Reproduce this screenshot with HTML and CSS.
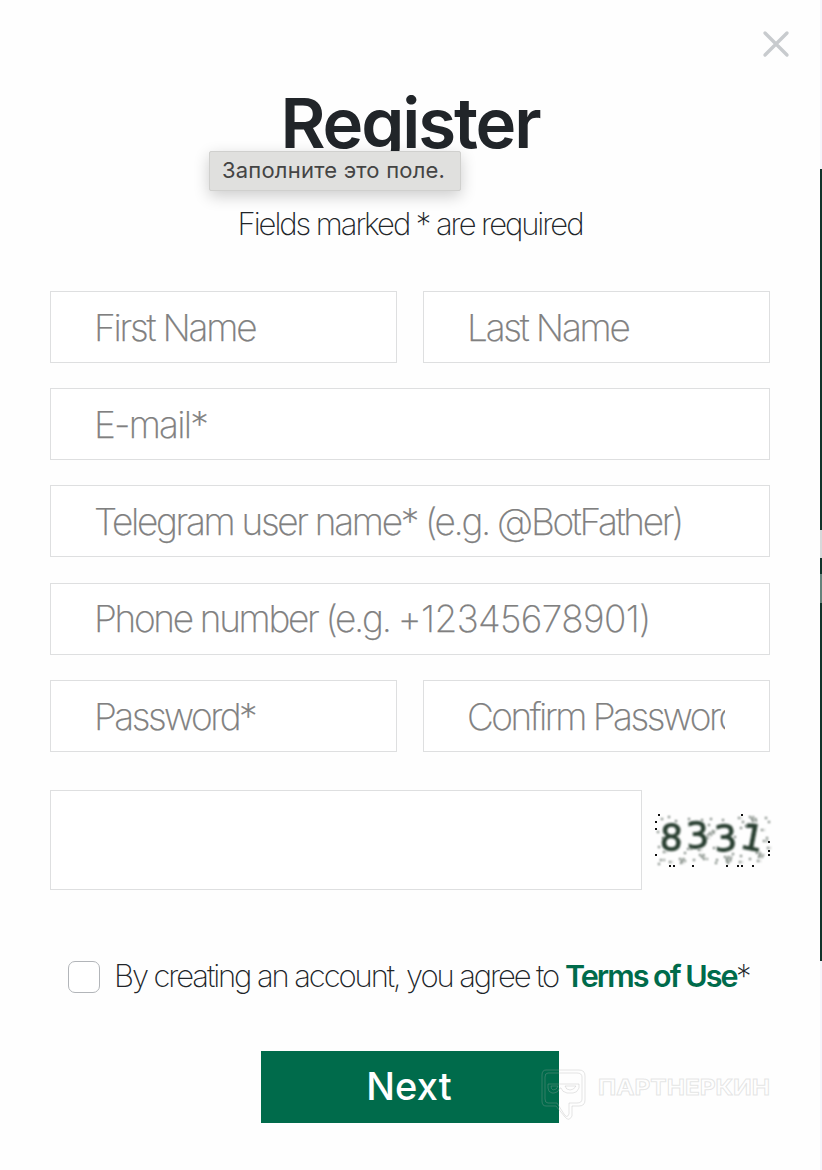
FILE: index.html
```
<!DOCTYPE html>
<html lang="en">
<head>
<meta charset="utf-8">
<title>Register</title>
<link rel="stylesheet" href="styles.css">
</head>
<body>
<main class="modal">
  <button class="close" aria-label="Close"><svg width="28" height="28" viewBox="0 0 28 28"><path d="M3 3l22 22M25 3l-22 22"/></svg></button>
  <h1>Register</h1>
  <p class="note">Fields marked * are required</p>
  <form class="form" novalidate>
    <div class="row">
      <input class="field first" placeholder="First Name">
      <input class="field last" placeholder="Last Name">
    </div>
    <input class="field email" placeholder="E-mail*">
    <input class="field telegram" placeholder="Telegram user name* (e.g. @BotFather)">
    <div class="field phone">Phone number (e.g. <span>+12345678901)</span></div>
    <div class="row">
      <input class="field password" placeholder="Password*">
      <input class="field confirm" placeholder="Confirm Password*">
    </div>
    <div class="captcha-row">
      <input class="field captcha-input" aria-label="Code">
      <svg class="captcha" width="118" height="56" viewBox="0 0 118 56">
        <g class="smudge">
          <path d="M6 7h3M13 5h3M20 9h3M33 7h3M36 11h3M46 8h3M53 13h3M55 7h2M67 8h3M83 6h4M87 10h3M94 5h5M96 7h6M97 9h5M110 6h3M113 10h3M2 20h3M7 26h3M54 21h6M57 19h4M52 23h5M51 26h4M85 16h3M79 25h3M90 14h3M106 18h4M111 26h3M108 29h5M3 35h3M8 40h4M32 37h5M29 41h3M43 38h4M44 43h6M48 47h5M46 45h4M38 48h3M5 48h5M3 52h3M14 50h4M24 47h6M26 49h5M25 51h4M61 48h3M60 51h3M69 45h8M71 47h6M71 49h5M72 51h3M85 44h3M84 50h4M94 47h3M101 41h5M104 43h5M103 45h5M102 49h4M112 36h4M58 36h3M77 42h3"/>
        </g>
        <g class="digits">
          <text x="5" y="38" transform="rotate(2 15 25)">8</text>
          <text x="31" y="36" transform="rotate(-3 41 23)">3</text>
          <text x="59" y="39" transform="rotate(-3 68 27)">3</text>
          <text x="86" y="38" transform="rotate(11 96 25)">1</text>
        </g>
        <path class="specks" d="M3 3h2M86 3h2M0 10h2M0 17h2M0 43h2M14 54h2M18 54h2M37 54h2M71 54h2M82 54h2M86 54h2M97 54h2M113 30h2M113 39h2M113 43h2"/>
      </svg>
    </div>
    <div class="terms"><span class="check"></span><span class="agree">By creating an account, you agree to</span><b>Terms of Use</b><span>*</span></div>
    <button class="next" type="button">Next</button>
  </form>
  <div class="tooltip"><span>Заполните это поле.</span></div>
  <svg class="watermark" width="234" height="54" viewBox="0 0 234 54">
    <path d="M5 2H38Q44 2 44 8V32Q44 38 38 38H31V48Q28 54 24 49L15 38H5Q1 38 1 33V7Q1 2 5 2ZM7 5H36Q41 5 41 9V31Q41 35 36 35H28V46Q26 51 23 46L16 35H7Q4 35 4 31V9Q4 5 7 5ZM7 16H38V20Q36 25 32 25H26Q21 24 20 20H19Q17 25 13 25H11Q7 24 7 20Z"/>
    <path d="M10 18H17Q16 22 12 22Q10 21 10 18ZM24 18H35Q33 22 29 22Q25 22 24 18Z"/>
    <text x="57" y="27" textLength="172" lengthAdjust="spacingAndGlyphs">ПАРТНЕРКИН</text>
  </svg>
  <div class="backdrop"></div>
</main>
</body>
</html>
```
FILE: styles.css
```
*{box-sizing:border-box}
body{margin:0;background:#fff;font-family:Inter,sans-serif;font-weight:200;color:#212529}
.modal{position:relative;width:822px;height:1170px;padding:1px 52px 0 50px;overflow:hidden;background:#fefefe}
.close{position:absolute;right:32px;top:30px;border:0;background:none;padding:0}
.close svg{display:block;stroke:#c8cbce;stroke-width:3.4;stroke-linecap:round;fill:none}
h1{margin:80px 0 0;font-size:69px;line-height:84px;font-weight:600;text-align:center;letter-spacing:-2.1px}
.note{margin:37px 0 0;font-size:31px;line-height:44px;text-align:center;letter-spacing:-2.05px}
.form{margin-top:45px;display:flex;flex-direction:column}
.form>.field,.row+.row{margin-top:25.2px}
.row{display:grid;grid-template-columns:347px 347px;gap:26px}
.field{display:block;width:100%;min-width:0;height:72px;margin:0;border:1px solid #dedfe0;border-radius:0;padding:0 43px;background:#fff;font:200 37px Inter,sans-serif;letter-spacing:-2px;outline:0}
.field::placeholder{color:#808080;opacity:1;-webkit-text-stroke:.25px #808080}
.first,.last{letter-spacing:-2.2px}
.email{letter-spacing:-1.8px}
.telegram{letter-spacing:-2.3px}
.phone{line-height:70px;color:#808080;-webkit-text-stroke:.25px #808080;letter-spacing:-2.3px;white-space:nowrap}
.phone span{letter-spacing:-.6px}
.form>.phone{margin-top:25.6px}
.phone+.row{margin-top:25.2px}
.password{letter-spacing:-2.5px}
.confirm{letter-spacing:-2.5px;padding-right:44px}
.captcha-row{display:flex;gap:13px;align-items:center;margin-top:37.8px}
.captcha-input{flex:none;width:592px;height:100px}
.captcha{flex:none}
.digits{font:400 36px "DejaVu Sans",sans-serif;fill:#283e30;stroke:#283e30;stroke-width:1;filter:blur(.8px)}
.smudge{fill:none;stroke:#667269;stroke-width:2;stroke-dasharray:2 1.5;filter:blur(.8px)}
.specks{stroke:#111;stroke-width:2}
.terms{display:flex;align-items:center;height:44px;margin:65px 0 0 18px;font-size:31px;line-height:40px;white-space:nowrap}
.terms span:not(.check),.terms b{padding-bottom:2px}
.check{flex:none;width:32px;height:32px;border:1px solid #b2b5b9;border-radius:7px;margin-right:14px;background:#fff}
.agree{width:451px;letter-spacing:-2.1px}
.terms b{width:171px;color:#006b4b;font-size:30.500px;font-weight:600;letter-spacing:-2px}
.next{width:298px;height:72px;margin:52px 0 0;background:#006b4b;color:#fff;border:0;align-self:center;font:500 38px Inter,sans-serif;letter-spacing:.1px;padding:0 2px 2px 0}
.tooltip{position:absolute;left:209px;top:151px;width:252px;height:40px;background:#e0e0de;border:1px solid #d0d0ce;border-radius:2px;box-shadow:0 5px 16px #0003;font-size:22px;font-weight:400;line-height:37px;padding-left:12px;color:#444;letter-spacing:.2px;white-space:nowrap}
.watermark{position:absolute;left:541px;top:1068px;fill:none;stroke:#a8aaa9;stroke-opacity:.3;stroke-width:1}
.watermark text{font:700 22px Inter,sans-serif}
.backdrop{position:absolute;right:0;top:0;width:2px;height:1170px;background:linear-gradient(#f5f5fb 169px,#10332a 169px 530px,#d5d9da 530px 558px,#10332a 558px 574px,#64827a 574px 603px,#10332a 603px 961px,#f5f5fb 961px)}
```
